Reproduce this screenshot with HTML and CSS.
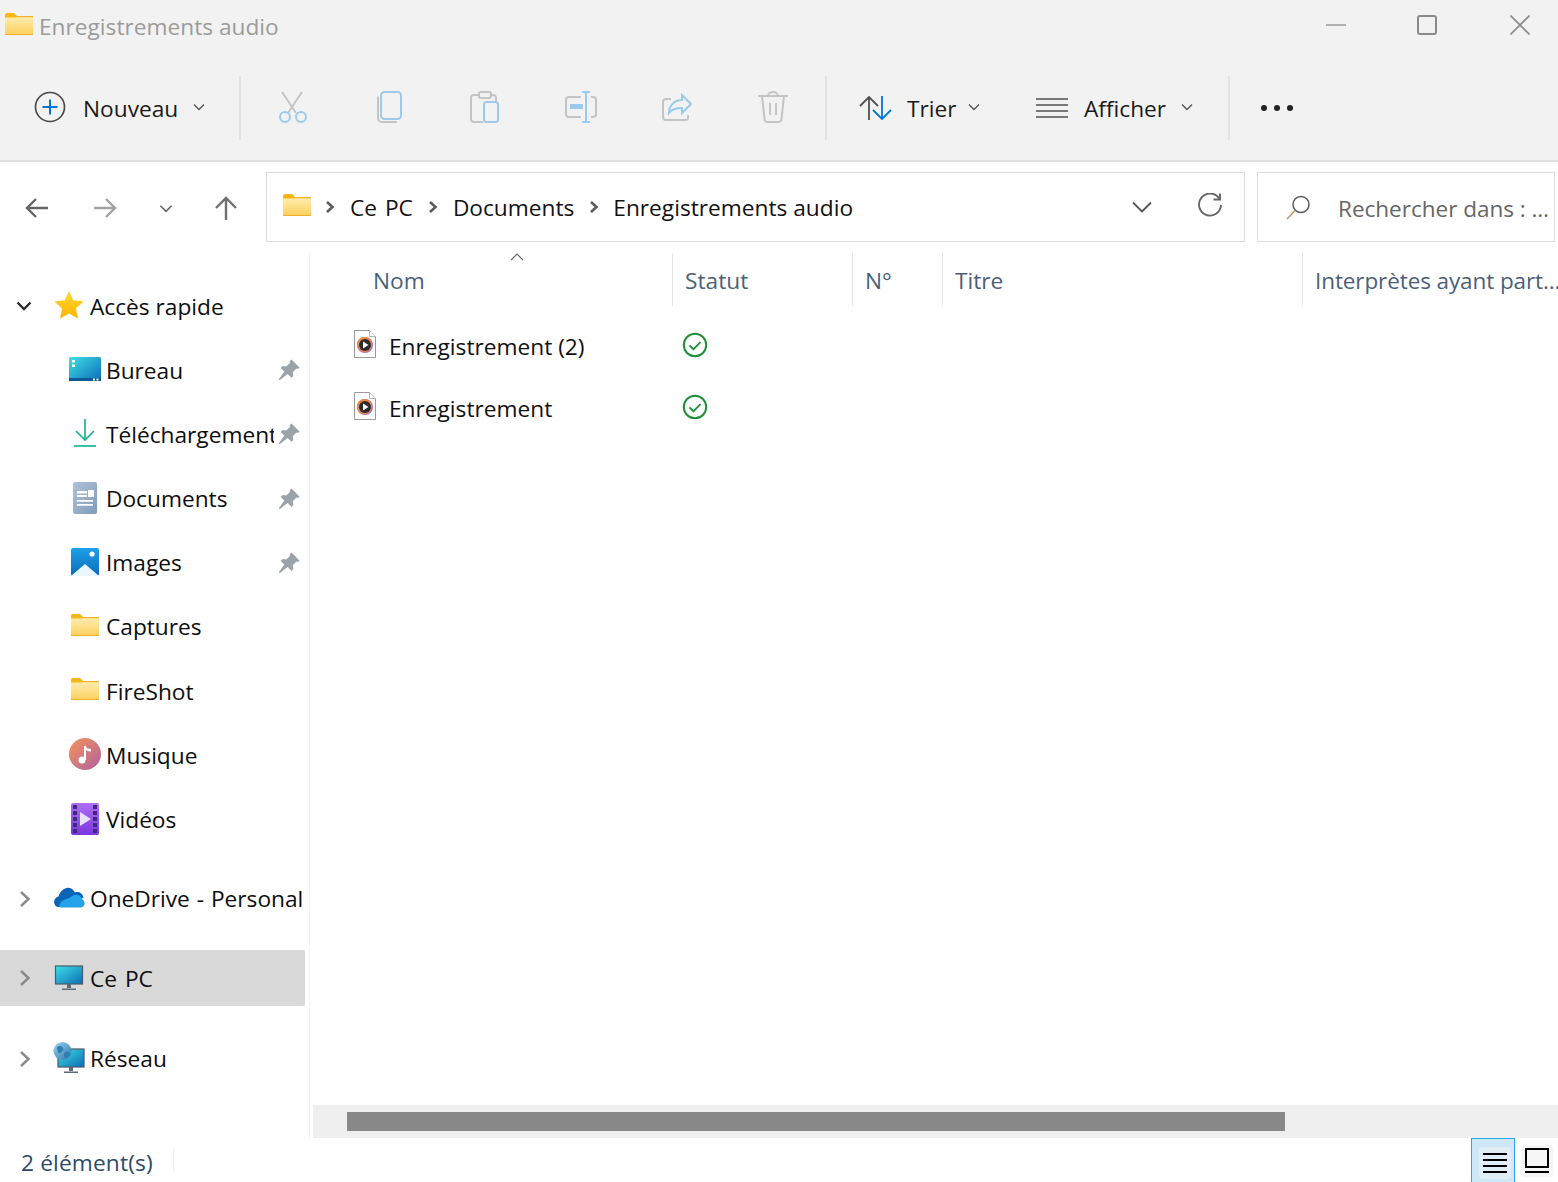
FILE: index.html
```html
<!DOCTYPE html>
<html lang="fr">
<head>
<meta charset="utf-8">
<title>Enregistrements audio</title>
<link rel="stylesheet" href="styles.css">
</head>
<body>
<svg class="defs" width="0" height="0" aria-hidden="true">
  <defs>
    <linearGradient id="gFolder" x1="0" y1="0" x2="0" y2="1"><stop offset="0" stop-color="#ffeeb0"/><stop offset="1" stop-color="#fdcf5c"/></linearGradient>
    <linearGradient id="gScreen" x1="0" y1="0" x2="1" y2="1"><stop offset="0" stop-color="#3fe0e8"/><stop offset="1" stop-color="#0b6cb5"/></linearGradient>
    <linearGradient id="gBlue" x1="0" y1="0" x2="0" y2="1"><stop offset="0" stop-color="#1fa0e8"/><stop offset="1" stop-color="#0b6cb8"/></linearGradient>
    <linearGradient id="gDoc" x1="0" y1="0" x2="1" y2="1"><stop offset="0" stop-color="#afc3d8"/><stop offset="1" stop-color="#7f9ab8"/></linearGradient>
    <linearGradient id="gMusic" x1="0" y1="0" x2="1" y2="1"><stop offset="0" stop-color="#f5945a"/><stop offset="1" stop-color="#b0609f"/></linearGradient>
    <linearGradient id="gVideo" x1="0" y1="0" x2="0" y2="1"><stop offset="0" stop-color="#b06ff5"/><stop offset="1" stop-color="#7a35e0"/></linearGradient>
    <linearGradient id="gStar" x1="0" y1="0" x2="0" y2="1"><stop offset="0" stop-color="#ffd630"/><stop offset="1" stop-color="#ffb400"/></linearGradient>
    <linearGradient id="gGlobe" x1="0" y1="0" x2="1" y2="1"><stop offset="0" stop-color="#9ed3ee"/><stop offset="1" stop-color="#2678ad"/></linearGradient>
    <symbol id="folder" viewBox="0 0 28 22">
      <path d="M0 2a2 2 0 0 1 2-2h7l3 3h16v3H0z" fill="#fdb515"/>
      <path d="M0 4.500h12l2-1h14V22H0z" fill="url(#gFolder)"/>
      <path d="M13 3h15v1.200H13zM0 21h28v1H0z" fill="#f0b22c"/>
    </symbol>
    <symbol id="pin" viewBox="0 0 22 22">
      <path d="M13.500 .5l8 8-1.500 1.500-1.700-.5-3.500 3.800.5 3.700-1.800 1.800-3.900-3.900L2 21H1v-1l5.400-7.400L2.700 8.900 4.500 7.100 8.200 7.600l3.800-3.500-.5-1.700z" fill="#9aa3aa"/>
    </symbol>
    <symbol id="file" viewBox="0 0 22 28">
      <path d="M.5.500h15l6 6v21H.5z" fill="#fbfcfe" stroke="#9a9a9a"/>
      <path d="M15.500.500v6h6" fill="#fff" stroke="#b5b5b5"/>
      <circle cx="11" cy="15" r="8" fill="#b56bb0"/>
      <circle cx="10.500" cy="14.500" r="7.500" fill="#ee8a3c"/>
      <circle cx="11" cy="15" r="6" fill="#2b2b30"/>
      <path d="M9 11.500l5.500 3.500L9 18.500z" fill="#fff"/>
    </symbol>
    <symbol id="check" viewBox="0 0 26 26">
      <circle cx="13" cy="13" r="11.200" fill="none" stroke="#1f8f3a" stroke-width="2"/>
      <path d="M7.500 13.500l4 3.700 7-7" fill="none" stroke="#1f8f3a" stroke-width="1.800"/>
    </symbol>
    <symbol id="chev" viewBox="0 0 12 8">
      <path d="M1 1.500l5 5 5-5" fill="none" stroke="currentColor" stroke-width="1.400"/>
    </symbol>
    <symbol id="crumb" viewBox="0 0 10 14">
      <path d="M2 2l5.500 5L2 12" fill="none" stroke="#5a5a5a" stroke-width="2.600"/>
    </symbol>
    <symbol id="side" viewBox="0 0 12 18">
      <path d="M2 2l7.500 7L2 16" fill="none" stroke="#8a8a8a" stroke-width="2.400"/>
    </symbol>
  </defs>
</svg>

<div class="window">
  <header class="titlebar">
    <svg class="ic-folder"><use href="#folder"/></svg>
    <span class="title">Enregistrements audio</span>
    <div class="winctl">
      <svg class="wc wc-min" viewBox="0 0 20 20"><path d="M0 10h20" stroke="#9a9a9a" stroke-width="1.500"/></svg>
      <svg class="wc wc-max" viewBox="0 0 20 20"><rect x="1" y="1" width="18" height="18" rx="2" fill="none" stroke="#8a8a8a" stroke-width="2"/></svg>
      <svg class="wc wc-close" viewBox="0 0 20 20"><path d="M.5.500l19 19M19.500.500l-19 19" stroke="#8a8a8a" stroke-width="1.600"/></svg>
    </div>
  </header>

  <div class="toolbar">
    <div class="tb-btn tb-new">
      <svg class="ic-new" viewBox="0 0 32 32"><circle cx="16" cy="16" r="14.500" fill="none" stroke="#4a4a4a" stroke-width="1.700"/><path d="M16 8.500v15M8.500 16h15" stroke="#0078d4" stroke-width="2"/></svg>
      <span class="tb-label">Nouveau</span>
      <svg class="ic-chev"><use href="#chev"/></svg>
    </div>
    <div class="tb-sep"></div>
    <div class="tb-icons">
      <div class="tb-icon"><svg width="30" height="32" viewBox="0 0 30 32"><path d="M4 1l14 21M24 1L10 22" stroke="#c2c2c2" stroke-width="1.800" fill="none"/><circle cx="7" cy="26" r="5" fill="none" stroke="#9ccaec" stroke-width="2"/><circle cx="23" cy="26" r="5" fill="none" stroke="#9ccaec" stroke-width="2"/></svg></div>
      <div class="tb-icon"><svg width="26" height="32" viewBox="0 0 26 32"><path d="M2 5.500V27a4 4 0 0 0 4 4h15" fill="none" stroke="#c4c4c4" stroke-width="2"/><rect x="5" y="1" width="20" height="27" rx="3.500" fill="none" stroke="#9ccaec" stroke-width="2"/></svg></div>
      <div class="tb-icon"><svg width="30" height="32" viewBox="0 0 30 32"><path d="M9 4H4a3 3 0 0 0-3 3v21a3 3 0 0 0 3 3h9M21 4h2a3 3 0 0 1 3 3v3" fill="none" stroke="#c4c4c4" stroke-width="2"/><rect x="9" y="1" width="12" height="6" rx="2" fill="none" stroke="#c4c4c4" stroke-width="2"/><rect x="14" y="11" width="14" height="20" rx="2.500" fill="none" stroke="#9ccaec" stroke-width="2"/></svg></div>
      <div class="tb-icon"><svg width="32" height="32" viewBox="0 0 32 32"><path d="M16 6H4a3 3 0 0 0-3 3v14a3 3 0 0 0 3 3h12M26 6h2a3 3 0 0 1 3 3v14a3 3 0 0 1-3 3h-2" fill="none" stroke="#c4c4c4" stroke-width="2"/><rect x="5" y="13" width="13" height="5" fill="#9ccaec"/><path d="M21 1v30M17 1h8M17 31h8" fill="none" stroke="#9ccaec" stroke-width="2"/></svg></div>
      <div class="tb-icon"><svg class="ic-share" width="30" height="30" viewBox="0 0 30 30"><path d="M9 6H4a3 3 0 0 0-3 3v15a3 3 0 0 0 3 3h20a2 2 0 0 0 2-2v-3" fill="none" stroke="#c4c4c4" stroke-width="2"/><path d="M20 2l9 9-9 9v-5c-6 0-10 1-13 5 0-7 5-13 13-13z" fill="none" stroke="#9ccaec" stroke-width="2"/></svg></div>
      <div class="tb-icon"><svg width="30" height="32" viewBox="0 0 30 32"><path d="M0 5h30M10 5a5 4 0 0 1 10 0M4 5l2.500 23a3 3 0 0 0 3 3h11a3 3 0 0 0 3-3L26 5M12 12v12M18 12v12" fill="none" stroke="#c4c4c4" stroke-width="2"/></svg></div>
    </div>
    <div class="tb-sep"></div>
    <div class="tb-btn tb-sort">
      <svg class="ic-sort" viewBox="0 0 33 26"><path d="M10 25V2M1 11l9-9 9 9" fill="none" stroke="#505050" stroke-width="1.800"/><path d="M23 1v23M14 15l9 9 9-9" fill="none" stroke="#0078d4" stroke-width="1.800"/></svg>
      <span class="tb-label">Trier</span>
      <svg class="ic-chev"><use href="#chev"/></svg>
    </div>
    <div class="tb-btn tb-view">
      <svg class="ic-lines" viewBox="0 0 32 20"><path d="M0 1h32M0 7h32M0 13h32M0 19h32" stroke="#505050" stroke-width="1.700"/></svg>
      <span class="tb-label">Afficher</span>
      <svg class="ic-chev"><use href="#chev"/></svg>
    </div>
    <div class="tb-sep"></div>
    <svg class="ic-dots" viewBox="0 0 32 6"><circle cx="3" cy="3" r="3" fill="#222"/><circle cx="16" cy="3" r="3" fill="#222"/><circle cx="29" cy="3" r="3" fill="#222"/></svg>
  </div>

  <div class="addressrow">
    <nav class="nav">
      <svg class="nav-back" width="24" height="22" viewBox="0 0 24 22"><path d="M23 11H2M11 2l-9 9 9 9" fill="none" stroke="#666" stroke-width="2.400"/></svg>
      <svg class="nav-fwd" width="24" height="22" viewBox="0 0 24 22"><path d="M1 11h21M13 2l9 9-9 9" fill="none" stroke="#a2a2a2" stroke-width="2.400"/></svg>
      <svg class="nav-down" width="14" height="9" viewBox="0 0 12 8"><path d="M1 1.500l5 5 5-5" fill="none" stroke="#666" stroke-width="1.400"/></svg>
      <svg class="nav-up" width="24" height="24" viewBox="0 0 24 24"><path d="M12 24V2M2 12L12 2l10 10" fill="none" stroke="#707070" stroke-width="2.400"/></svg>
    </nav>
    <div class="pathbox">
      <svg class="ic-folder"><use href="#folder"/></svg>
      <svg class="crumb crumb-first"><use href="#crumb"/></svg>
      <span class="crumb-text wide-space">Ce PC</span>
      <svg class="crumb"><use href="#crumb"/></svg>
      <span class="crumb-text">Documents</span>
      <svg class="crumb crumb-last"><use href="#crumb"/></svg>
      <span class="crumb-text">Enregistrements audio</span>
      <svg class="path-drop" width="20" height="13" viewBox="0 0 20 13"><path d="M1 1.500l9 9 9-9" fill="none" stroke="#555" stroke-width="1.800"/></svg>
      <svg class="path-refresh" width="24" height="24" viewBox="0 0 24 24"><path d="M21.500 6A11 11 0 1 0 23 12M22 .5V6.500h-6.500" fill="none" stroke="#666" stroke-width="1.900"/></svg>
    </div>
    <div class="searchbox">
      <svg class="ic-search" width="25" height="25" viewBox="0 0 25 25"><circle cx="15" cy="9.500" r="8" fill="none" stroke="#5a5a5a" stroke-width="1.500"/><path d="M9 15.500L1 24" fill="none" stroke="#c09a78" stroke-width="1.700"/></svg>
      <span class="search-text">Rechercher dans : …</span>
    </div>
  </div>

  <div class="main">
    <aside class="sidebar">
      <div class="group">
        <div class="row">
          <svg class="expander" viewBox="0 0 16 10"><path d="M1.500 1.500L8 8l6.500-6.500" fill="none" stroke="#2b2b2b" stroke-width="2.400"/></svg>
          <svg class="ic-top ic-star" viewBox="0 0 30 30"><path d="M15 1l4.300 9.300 10.200 1.200-7.600 6.900 2.100 10.100L15 23.400 6 28.500l2.100-10.100L.5 11.500l10.200-1.200z" fill="url(#gStar)"/></svg>
          <span class="label">Accès rapide</span>
        </div>
        <div class="row child">
          <svg class="ic-child" viewBox="0 0 32 32"><rect width="32" height="24" rx="1.500" y="4" fill="url(#gScreen)"/><rect y="25" width="32" height="3" fill="#0a5a96"/><path d="M3 7h3v2.500H3zM3 11.500h3V14H3zM24 25.500h2v2h-2zM27.500 25.500h2v2h-2z" fill="#fff"/></svg>
          <span class="label">Bureau</span>
          <svg class="pin"><use href="#pin"/></svg>
        </div>
        <div class="row child">
          <svg class="ic-child" viewBox="0 0 32 32"><path d="M16 2v20M7 14l9 9 9-9" fill="none" stroke="#1eb593" stroke-width="1.700"/><path d="M5 29h22" stroke="#22bd9c" stroke-width="1.800"/></svg>
          <span class="label">Téléchargement</span>
          <svg class="pin"><use href="#pin"/></svg>
        </div>
        <div class="row child">
          <svg class="ic-child" viewBox="0 0 32 32"><rect x="4" width="24" height="32" rx="2" fill="url(#gDoc)"/><path d="M8 9h10v2.500H8zM8 13h10v2H8zM8 18h16v1.700H8zM8 22h16v1.700H8z" fill="#fff"/><rect x="19" y="8" width="6" height="7" fill="#fff"/></svg>
          <span class="label">Documents</span>
          <svg class="pin"><use href="#pin"/></svg>
        </div>
        <div class="row child">
          <svg class="ic-child" viewBox="0 0 32 32"><rect x="2" y="2" width="28" height="28" rx="2" fill="url(#gBlue)"/><path d="M2 30l14-12 14 12z" fill="#eaf6fd"/><circle cx="23" cy="8" r="2.600" fill="#fff"/></svg>
          <span class="label">Images</span>
          <svg class="pin"><use href="#pin"/></svg>
        </div>
        <div class="row child">
          <svg class="ic-f"><use href="#folder"/></svg>
          <span class="label">Captures</span>
        </div>
        <div class="row child">
          <svg class="ic-f"><use href="#folder"/></svg>
          <span class="label">FireShot</span>
        </div>
        <div class="row child">
          <svg class="ic-child" viewBox="0 0 32 32"><circle cx="16" cy="16" r="16" fill="url(#gMusic)"/><path d="M16 8v14" stroke="#fff" stroke-width="2"/><circle cx="13" cy="22" r="3.500" fill="#fff"/><path d="M16 7c1 3 3 4 6 4v2.500c-3 0-5-1-6-2.500z" fill="#fff"/></svg>
          <span class="label">Musique</span>
        </div>
        <div class="row child">
          <svg class="ic-child" viewBox="0 0 32 32"><rect x="2" width="28" height="32" rx="2" fill="url(#gVideo)"/><path d="M4 2h4v4H4zM4 8h4v4H4zM4 14h4v4H4zM4 20h4v4H4zM4 26h4v4H4zM24 2h4v4h-4zM24 8h4v4h-4zM24 14h4v4h-4zM24 20h4v4h-4zM24 26h4v4h-4z" fill="#3f2a78"/><path d="M11 9l11 7-11 7z" fill="#e9e0fb"/></svg>
          <span class="label">Vidéos</span>
        </div>
      </div>
      <div class="group">
        <div class="row">
          <svg class="side"><use href="#side"/></svg>
          <svg class="ic-cloud" viewBox="0 0 32 22"><path d="M5 21C0 20-.5 12 5.500 10.500 8 2 17-2 22 6.500c4-1.500 7.500.5 8.500 5L12 21z" fill="#0a64b8"/><path d="M7 21.500h21c4 0 5-6 1.500-8C28 9 23 7.500 19.500 10 17 11.500 14 13 12 13.500c-4 1-7 6-5 8z" fill="#25a3ea"/></svg>
          <span class="label label-wide">OneDrive - Personal</span>
        </div>
      </div>
      <div class="group">
        <div class="row selected">
          <svg class="side"><use href="#side"/></svg>
          <svg class="ic-top" viewBox="0 0 30 26"><rect x="1.500" y="1" width="27" height="18" fill="url(#gScreen)" stroke="#4a5a66" stroke-width="1.200"/><path d="M13 19h4v4h-4zM8 23.500h14V25H8z" fill="#5d6b75"/></svg>
          <span class="label wide-space">Ce PC</span>
        </div>
      </div>
      <div class="group group-net">
        <div class="row">
          <svg class="side"><use href="#side"/></svg>
          <svg class="ic-net" viewBox="0 0 32 32"><rect x="5" y="7" width="26" height="18" fill="url(#gScreen)" stroke="#4a5a66" stroke-width="1.200"/><path d="M16 25h4v4h-4zM11 29.500h14V31H11z" fill="#5d6b75"/><circle cx="9.500" cy="9" r="9" fill="url(#gGlobe)"/><path d="M4 5c3-2 5-1 6 1s-1 4-3 5-3-4-3-6zM12 10c2-1 5 0 5 2s-3 5-5 4-1-5 0-6z" fill="#2f7fb2"/></svg>
          <span class="label">Réseau</span>
        </div>
      </div>
    </aside>

    <section class="content">
      <div class="cols header">
        <div class="col col-name">Nom<svg class="sort-arrow" width="14" height="8" viewBox="0 0 14 8"><path d="M1 7l6-6 6 6" fill="none" stroke="#666" stroke-width="1.100"/></svg></div>
        <div class="col">Statut</div>
        <div class="col">N°</div>
        <div class="col">Titre</div>
        <div class="col col-last">Interprètes ayant part…</div>
      </div>
      <div class="list">
        <div class="cols item">
          <div class="cell-name"><svg class="ic-file"><use href="#file"/></svg><span>Enregistrement (2)</span></div>
          <div class="cell-status"><svg class="ic-check"><use href="#check"/></svg></div>
        </div>
        <div class="cols item">
          <div class="cell-name"><svg class="ic-file"><use href="#file"/></svg><span>Enregistrement</span></div>
          <div class="cell-status"><svg class="ic-check"><use href="#check"/></svg></div>
        </div>
      </div>
      <div class="hscroll"><div class="hthumb"></div></div>
    </section>
  </div>

  <footer class="statusbar">
    <span class="count">2 élément(s)</span>
    <div class="viewbtns">
      <div class="vb vb-on"><div class="vb-inner"><svg width="24" height="20" viewBox="0 0 24 20"><path d="M0 1h24M0 7h24M0 13h24M0 19h24" stroke="#000" stroke-width="2"/></svg></div></div>
      <div class="vb-off"><svg width="24" height="26" viewBox="0 0 24 26"><rect x="1" y="1" width="22" height="18" fill="none" stroke="#000" stroke-width="2"/><path d="M0 24h24" stroke="#000" stroke-width="2"/></svg></div>
    </div>
  </footer>
</div>
</body>
</html>
```

FILE: styles.css
```css
* { box-sizing: border-box; }
html, body { margin: 0; padding: 0; }
body {
  width: 1558px;
  height: 1182px;
  overflow: hidden;
  background: #fff;
  font-family: "Open Sans", "Noto Sans", "Liberation Sans", sans-serif;
  font-size: 22.7px;
  color: #111;
}
.defs { position: absolute; }
svg { display: block; flex: none; }
.window { display: flex; flex-direction: column; height: 1182px; }
.wide-space { word-spacing: 2px; }

/* title bar */
.titlebar {
  display: flex;
  align-items: center;
  height: 54px;
  padding-left: 5px;
  background: #f2f2f2;
}
.ic-folder { width: 28px; height: 22px; margin-top: -6px; }
.title { margin: -2px 0 0 6px; color: #9b9b9b; }
.winctl { display: flex; margin: -4px 0 0 auto; padding-right: 28px; align-items: center; }
.wc { width: 20px; height: 20px; }
.wc-max { margin-left: 71px; }
.wc-close { margin-left: 73px; }

/* command bar */
.toolbar {
  display: flex;
  align-items: center;
  height: 108px;
  padding-top: 2px;
  background: #f2f2f2;
  border-bottom: 2px solid #e0e0e0;
}
.tb-btn { display: flex; align-items: center; }
.tb-new { width: 239px; padding-left: 34px; }
.ic-new { width: 32px; height: 32px; margin-top: -2px; }
.tb-label { margin-left: 17px; color: #1a1a1a; }
.ic-chev { width: 12px; height: 8px; margin: -2px 0 0 15px; color: #555; }
.tb-sep { width: 2px; height: 64px; background: #e2e2e2; }
.tb-icons { display: grid; grid-template-columns: repeat(6, 96px); margin: -2px 4px 0; }
.tb-icon { display: flex; justify-content: center; }
.ic-share { margin-top: 2px; }
.tb-sort { padding-left: 32px; width: 209px; }
.ic-sort { width: 33px; height: 26px; }
.tb-sort .tb-label { margin-left: 15px; }
.tb-sort .ic-chev { margin-left: 11px; }
.tb-view { width: 192px; }
.ic-lines { width: 32px; height: 20px; }
.tb-view .tb-label { margin-left: 16px; }
.ic-dots { width: 32px; height: 6px; margin-left: 31px; }

/* address row */
.addressrow {
  display: flex;
  align-items: flex-start;
  height: 90px;
  padding-top: 10px;
}
.nav { display: flex; align-items: center; width: 266px; height: 72px; padding-left: 25px; }
.nav-fwd { margin-left: 44px; }
.nav-down { margin-left: 42px; }
.nav-up { margin-left: 41px; }
.pathbox {
  display: flex;
  align-items: center;
  width: 979px;
  height: 70px;
  padding-left: 16px;
  border: 1.500px solid #dcdcdc;
  color: #111;
}
.pathbox .ic-folder { margin-top: -5px; }
.crumb { width: 10px; height: 14px; margin: 0 15px; }
.crumb-first { margin-left: 14px; }
.crumb-last { margin-right: 14px; }
.path-drop { margin-left: auto; }
.path-refresh { margin: -4px 22px 0 46px; }
.searchbox {
  display: flex;
  align-items: center;
  width: 298px;
  height: 70px;
  margin-left: 12px;
  padding-left: 28px;
  border: 1.500px solid #dcdcdc;
  color: #666;
}
.search-text { margin: 2px 0 0 27px; white-space: nowrap; font-size: 22.5px; }

/* main */
.main { display: flex; height: 886px; }
.sidebar {
  display: flex;
  flex-direction: column;
  gap: 23px;
  width: 310px;
  padding: 26px 4px 0 0;
  border-right: 1px solid #f3f3f3;
  flex: none;
}
.group { display: flex; flex-direction: column; gap: 8.200px; }
.group-net { margin-top: 2px; }
.row { display: flex; align-items: center; height: 56px; padding-left: 16px; }
.row.selected { background: #d9d9d9; border-radius: 0 2px 2px 0; }
.row.selected .label { padding-top: 2px; }
.expander { width: 16px; height: 10px; }
.side { width: 12px; height: 18px; margin-left: 3px; margin-right: 1px; }
.ic-top { width: 30px; height: 30px; margin-left: 22px; }
.ic-star { margin-top: -2px; }
.ic-cloud { width: 32px; height: 22px; margin: -3px 0 0 21px; }
.ic-net { width: 32px; height: 32px; margin: -2px -1px 0 21px; }
.label { margin-left: 6px; white-space: nowrap; overflow: hidden; color: #0d0d0d; }
.label-wide { margin-left: 5px; word-spacing: 1px; }
.row.child { padding-left: 69px; }
.ic-child { width: 32px; height: 32px; margin-top: -2px; }
.ic-f { width: 28px; height: 22px; margin: -4px 2px 0; }
.child .label { margin-left: 5px; width: 168px; }
.pin { width: 22px; height: 22px; margin-left: 4px; }

/* content */
.content { display: flex; flex-direction: column; flex: 1; min-width: 0; position: relative; }
.cols { display: grid; grid-template-columns: 362px 180px 90px 360px 1fr; align-items: center; }
.header { height: 53px; margin-top: 1px; color: #4d5f78; flex: none; }
.col { height: 53px; line-height: 55px; padding-left: 12px; border-left: 1px solid #e5e5e5; white-space: nowrap; overflow: hidden; }
.col-name { border-left: 0; padding-left: 63px; position: relative; overflow: visible; }
.col-last { font-size: 22.5px; letter-spacing: -0.1px; }
.sort-arrow { position: absolute; left: 200px; top: 0; }
.list { flex: 1; padding-top: 8px; }
.item { height: 62px; }
.cell-name { display: flex; align-items: center; padding-left: 44px; margin-top: 2px; }
.ic-file { width: 22px; height: 28px; margin-top: -4px; }
.cell-name span { margin-left: 13px; color: #111; white-space: nowrap; }
.cell-status { padding-left: 10px; }
.ic-check { width: 26px; height: 26px; }
.hscroll { flex: none; height: 33px; margin-left: 3px; padding: 7px 0 0 34px; background: #efefef; }
.hthumb { width: 938px; height: 19px; background: #888; }

/* status bar */
.statusbar { display: flex; align-items: center; height: 44px; padding-left: 21px; }
.count { width: 153px; color: #2c4a6a; border-right: 1px solid #f0f0f0; height: 22px; line-height: 28px; white-space: nowrap; letter-spacing: 0.15px; }
.viewbtns { display: flex; align-items: center; margin-left: auto; padding-right: 5px; height: 44px; }
.vb { width: 44px; height: 44px; padding: 8px 0 0 7px; background: #cde8f7; border: 1px solid #29a8e8; border-bottom: 0; }
.vb-inner { display: flex; align-items: center; justify-content: center; width: 32px; height: 32px; background: #e2eef6; border-radius: 4px; }
.vb-off { display: flex; align-items: center; justify-content: center; width: 32px; height: 32px; margin: 2px 0 0 6px; background: #f6f6f6; border-radius: 4px; }
```
